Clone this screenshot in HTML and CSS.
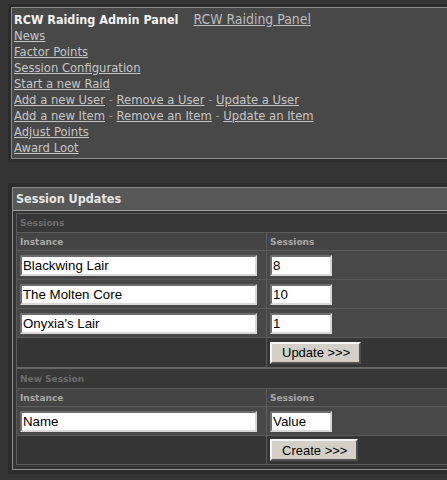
FILE: index.html
```html
<!DOCTYPE html>
<html>
<head>
<meta charset="utf-8">
<title>RCW Raiding Admin Panel</title>
<link rel="stylesheet" href="styles.css">
</head>
<body>
<div class="nav-box">
  <div class="nav">
    <div class="nav-head"><span class="nav-title">RCW Raiding Admin Panel</span><a class="nav-home" href="#">RCW Raiding Panel</a></div>
    <div><a href="#">News</a></div>
    <div><a href="#">Factor Points</a></div>
    <div><a href="#">Session Configuration</a></div>
    <div><a href="#">Start a new Raid</a></div>
    <div><a href="#">Add a new User</a><span class="sep"> - </span><a href="#">Remove a User</a><span class="sep"> - </span><a href="#">Update a User</a></div>
    <div><a href="#">Add a new Item</a><span class="sep"> - </span><a href="#">Remove an Item</a><span class="sep"> - </span><a href="#">Update an Item</a></div>
    <div><a href="#">Adjust Points</a></div>
    <div><a href="#">Award Loot</a></div>
  </div>
</div>

<div class="panel">
  <div class="panel-in">
    <h2 class="panel-title">Session Updates</h2>
    <div class="panel-body">
      <table class="grid">
        <tr class="sec"><th colspan="2">Sessions</th></tr>
        <tr class="cols"><th class="c1">Instance</th><th>Sessions</th></tr>
        <tr class="data"><td class="c1"><input class="in-name" type="text" value="Blackwing Lair"></td><td><input class="in-num" type="text" value="8"></td></tr>
        <tr class="data"><td class="c1"><input class="in-name" type="text" value="The Molten Core"></td><td><input class="in-num" type="text" value="10"></td></tr>
        <tr class="data"><td class="c1"><input class="in-name" type="text" value="Onyxia's Lair"></td><td><input class="in-num" type="text" value="1"></td></tr>
        <tr class="act act-tall"><td class="c1"></td><td><button class="btn" type="button">Update &gt;&gt;&gt;</button></td></tr>
        <tr class="sec sec2"><th colspan="2">New Session</th></tr>
        <tr class="cols"><th class="c1">Instance</th><th>Sessions</th></tr>
        <tr class="data"><td class="c1"><input class="in-name" type="text" value="Name"></td><td><input class="in-num" type="text" value="Value"></td></tr>
        <tr class="act"><td class="c1"></td><td><button class="btn" type="button">Create &gt;&gt;&gt;</button></td></tr>
      </table>
    </div>
  </div>
</div>
</body>
</html>
```
FILE: styles.css
```css
html, body {
  margin: 0;
  padding: 0;
  overflow: hidden;
}
body {
  background: #353535;
  font-family: "DejaVu Sans", Verdana, sans-serif;
}

/* top navigation box */
.nav-box {
  margin: 4px 0 0 8px;
  border: 3px solid #2b2b2b;
  border-right: 0;
}
.nav {
  border: 1px solid #8c8c8c;
  border-right: 0;
  background: #484848;
  padding: 3px 0 2px 2px;
  font-family: "DejaVu Sans", Verdana, sans-serif;
  font-size: 11.6px;
  line-height: 16px;
  color: #c4c4c4;
}
.nav a {
  color: #c6c6c6;
  text-decoration: underline;
}
.nav-title {
  font-family: "DejaVu Sans Condensed", "DejaVu Sans", sans-serif;
  font-stretch: condensed;
  font-size: 12.5px;
  font-weight: bold;
  color: #f2f2f2;
  margin-right: 15px;
}
.nav .nav-home {
  font-family: "DejaVu Sans Condensed", "DejaVu Sans", sans-serif;
  font-stretch: condensed;
  font-size: 13.9px;
  color: #bcbcbc;
}
.sep {
  color: #9a9a9a;
}

/* session panel */
.panel {
  margin: 21px 0 0 8px;
  border: 4px solid #2c2c2c;
  border-right: 0;
}
.panel-in {
  border: 1px solid #8e8e8e;
  border-right: 0;
  background: #343434;
}
.panel-title {
  margin: 0;
  padding-left: 3px;
  font-family: "DejaVu Sans Condensed", "DejaVu Sans", sans-serif;
  font-stretch: condensed;
  font-size: 12.5px;
  font-weight: bold;
  line-height: 22px;
  color: #e6e6e6;
  background: #575757;
  border-bottom: 1px solid #a0a0a0;
}
.panel-body {
  padding: 2px 0 4px 3px;
}

.grid {
  width: 100%;
  border-collapse: collapse;
  border: 1px solid #6a6a6a;
  border-right: 0;
}
.grid th,
.grid td {
  border: 1px solid #5b5b5b;
  border-right: 0;
  padding: 0 0 0 3px;
  text-align: left;
  vertical-align: middle;
}
.grid .c1 {
  width: 246px;
  border-right: 1px solid #5b5b5b;
}
.grid th {
  font-family: "DejaVu Sans", Verdana, sans-serif;
  font-size: 9px;
  font-weight: bold;
}
.sec th {
  height: 18px;
  background: #373737;
  color: #6c6c6c;
}
.sec2 th {
  height: 19px;
  border-top: 2px solid #666666;
}
.cols th {
  height: 17px;
  background: #444444;
  color: #a8a8a8;
}
.data td {
  height: 28px;
  background: #484848;
}
.act td {
  height: 28px;
  background: #353535;
}
.act-tall td {
  height: 29px;
}

.in-name,
.in-num {
  box-sizing: border-box;
  display: block;
  height: 21px;
  margin: 0;
  padding: 0 1px;
  font-family: "Liberation Sans", Arial, sans-serif;
  font-size: 13.3px;
  color: #000;
  background: #fff;
  border: 2px solid;
  border-color: #6e6e6e #d8d8d8 #d8d8d8 #6e6e6e;
  outline: none;
}
.in-name {
  width: 237px;
}
.in-num {
  width: 62px;
}

.btn {
  display: block;
  box-sizing: border-box;
  height: 22px;
  margin: 0;
  padding: 0 9px 0 10px;
  font-family: "Liberation Sans", Arial, sans-serif;
  font-size: 13px;
  color: #000;
  background: #d4d0c8;
  border: 2px solid;
  border-color: #f4f4f4 #505050 #505050 #f4f4f4;
  border-radius: 0;
}
```
